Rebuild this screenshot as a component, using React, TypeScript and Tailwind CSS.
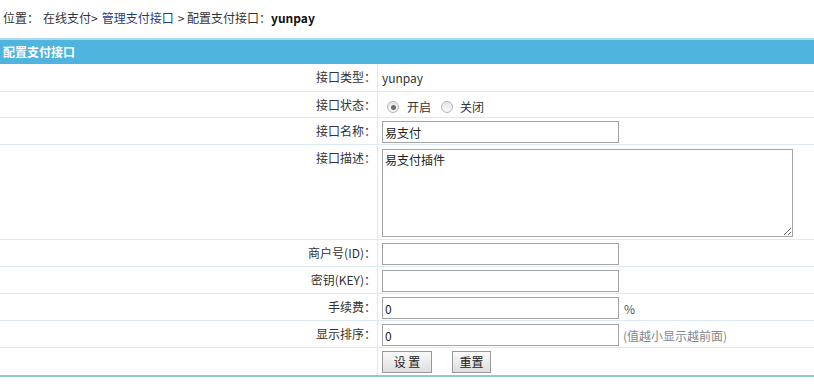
import React from 'react';

const font = { fontFamily: '"Noto Sans CJK SC", "Liberation Sans", sans-serif' };

function Row({ label, className, children }: { label: string; className?: string; children?: React.ReactNode }) {
  return (
    <div className={`grid grid-cols-[378px_1fr] border-b border-[#dcebf2] ${className ?? 'h-[27px]'}`}>
      <div className="border-r border-[#dcebf2] pr-[1px] pt-[5px] text-right text-[#333]">{label}</div>
      <div className="flex items-start pl-[4px] pt-[3px]">{children}</div>
    </div>
  );
}

function Radio({ checked }: { checked?: boolean }) {
  return (
    <span className="flex h-[12px] w-[12px] items-center justify-center rounded-full border border-[#b5b5b5] bg-gradient-to-b from-[#e6e6e6] to-[#fafafa]">
      {checked && <span className="h-[5px] w-[5px] rounded-full bg-[#6d6d6d]" />}
    </span>
  );
}

function Field({ value }: { value?: string }) {
  return (
    <input
      defaultValue={value}
      className="h-[22px] w-[237px] border border-[#a5a5a5] bg-white px-[2px] text-[12px] text-[#222] outline-none"
      style={font}
    />
  );
}

export default function App() {
  return (
    <div className="w-[814px] h-[392px] bg-white text-[12px] leading-[16px]" style={font}>
      <div className="flex h-[38px] items-center pl-[3px] pb-[2px] text-[#333]">
        <span>位置：</span>
        <span className="ml-[4px]">在线支付&gt;</span>
        <span className="ml-[4px] text-[#1d3e87]">管理支付接口</span>
        <span className="ml-[4px]">&gt; 配置支付接口：</span>
        <span className="font-bold text-[#111]">yunpay</span>
      </div>

      <div className="border-t-2 border-[#a9dbef]">
        <div className="flex h-[24px] items-center bg-[#4fb4de] pl-[3px] font-bold text-white">配置支付接口</div>
      </div>

      <Row label="接口类型：" className="h-[28px]">
        <span className="pt-[3px] text-[#333]">yunpay</span>
      </Row>
      <Row label="接口状态：" className="h-[26px]">
        <div className="flex items-center pl-[5px] pt-[4px] text-[#333]">
          <Radio checked />
          <span className="ml-[8px]">开启</span>
          <span className="ml-[10px]"><Radio /></span>
          <span className="ml-[7px]">关闭</span>
        </div>
      </Row>
      <Row label="接口名称：">
        <Field value="易支付" />
      </Row>
      <Row label="接口描述：" className="h-[95px]">
        <textarea
          defaultValue="易支付插件"
          className="mt-[1px] h-[88px] w-[411px] resize-y border border-[#a5a5a5] px-[2px] py-[2px] text-[12px] text-[#222] outline-none"
          style={font}
        />
      </Row>
      <Row label="商户号(ID)：">
        <Field />
      </Row>
      <Row label="密钥(KEY)：">
        <Field />
      </Row>
      <Row label="手续费：">
        <Field value="0" />
        <span className="ml-[5px] pt-[4px] text-[#555]">%</span>
      </Row>
      <Row label="显示排序：">
        <Field value="0" />
        <span className="ml-[4px] pt-[4px] text-[#888]">(值越小显示越前面)</span>
      </Row>
      <div className="grid h-[29px] grid-cols-[378px_1fr] border-b-2 border-[#8fcbcc]">
        <div className="border-r border-[#dcebf2]" />
        <div className="flex items-start gap-[20px] pl-[4px] pt-[3px]">
          <button className="h-[22px] w-[50px] border border-[#999] bg-gradient-to-b from-[#fafafa] to-[#dedede] text-[12px] text-[#222]" style={font}>
            设 置
          </button>
          <button className="h-[22px] w-[39px] border border-[#999] bg-gradient-to-b from-[#fafafa] to-[#dedede] text-[12px] text-[#222]" style={font}>
            重置
          </button>
        </div>
      </div>
    </div>
  );
}
